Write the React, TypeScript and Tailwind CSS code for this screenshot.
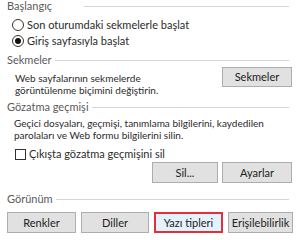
import React from "react";

const Header = ({ title, gap = "ml-[3px]" }: { title: string; gap?: string }) => (
  <div className="flex items-center pl-[7px] pr-[12px] h-[12px]">
    <span className="text-[#5a5a5a] leading-[12px]">{title}</span>
    <div className={`flex-1 h-px bg-[#d5d5d5] ${gap}`} />
  </div>
);

const Button = ({
  label,
  width,
  height = "h-[21px]",
  active = false,
}: {
  label: string;
  width: string;
  height?: string;
  active?: boolean;
}) => (
  <button
    className={`${width} ${height} shrink-0 flex items-center justify-center leading-[12px] text-[#222] ${
      active
        ? "border-2 border-[#e0303a] bg-[#e5f1fb]"
        : "border border-[#adadad] bg-[#e1e1e1]"
    }`}
  >
    {label}
  </button>
);

const Radio = ({ checked, label }: { checked?: boolean; label: string }) => (
  <div className="flex items-center pl-[12px] h-[16px]">
    <span className="w-[12px] h-[12px] rounded-full border border-[#333] bg-white flex items-center justify-center">
      {checked && <span className="w-[6px] h-[6px] rounded-full bg-[#111]" />}
    </span>
    <span className="ml-[3px]">{label}</span>
  </div>
);

export default function App() {
  return (
    <div
      className="w-[301px] h-[240px] bg-white text-[11px] leading-[12px] text-[#2b2b2b] flex flex-col overflow-hidden"
      style={{ fontFamily: 'Lato, "Noto Sans", sans-serif' }}
    >
      {/* Başlangıç */}
      <Header title="Başlangıç" gap="ml-[32px]" />
      <div className="mt-[5px]">
        <Radio label="Son oturumdaki sekmelerle başlat" />
      </div>
      <Radio checked label="Giriş sayfasıyla başlat" />

      {/* Sekmeler */}
      <div className="mt-[5px]">
        <Header title="Sekmeler" />
      </div>
      <div className="flex items-start mt-[1px] pl-[15px] pr-[9px]">
        <div className="flex-1 mt-[5px] flex flex-col text-[10px]">
          <span className="h-[12px]">Web sayfalarının sekmelerde</span>
          <span className="h-[12px]">görüntülenme biçimini değiştirin.</span>
        </div>
        <Button label="Sekmeler" width="w-[70px]" height="h-[20px]" />
      </div>

      {/* Gözatma geçmişi */}
      <div className="mt-[5px]">
        <Header title="Gözatma geçmişi" />
      </div>
      <div className="mt-[4px] pl-[14px] flex flex-col text-[10px]">
        <span className="h-[12px]">Geçici dosyaları, geçmişi, tanımlama bilgilerini, kaydedilen</span>
        <span className="h-[12px]">parolaları ve Web formu bilgilerini silin.</span>
      </div>
      <div className="flex items-center mt-[7px] pl-[15px] h-[12px]">
        <span className="w-[11px] h-[11px] border border-[#333] bg-white" />
        <span className="ml-[3px]">Çıkışta gözatma geçmişini sil</span>
      </div>
      <div className="flex justify-end gap-[4px] mt-[2px] pr-[9px]">
        <Button label="Sil..." width="w-[66px]" />
        <Button label="Ayarlar" width="w-[70px]" />
      </div>

      {/* Görünüm */}
      <div className="mt-[10px]">
        <Header title="Görünüm" />
      </div>
      <div className="flex gap-[5px] mt-[7px] pl-[7px]">
        <Button label="Renkler" width="w-[69px]" />
        <Button label="Diller" width="w-[68px]" />
        <Button label="Yazı tipleri" width="w-[69px]" active />
        <Button label="Erişilebilirlik" width="w-[65px]" />
      </div>
    </div>
  );
}
